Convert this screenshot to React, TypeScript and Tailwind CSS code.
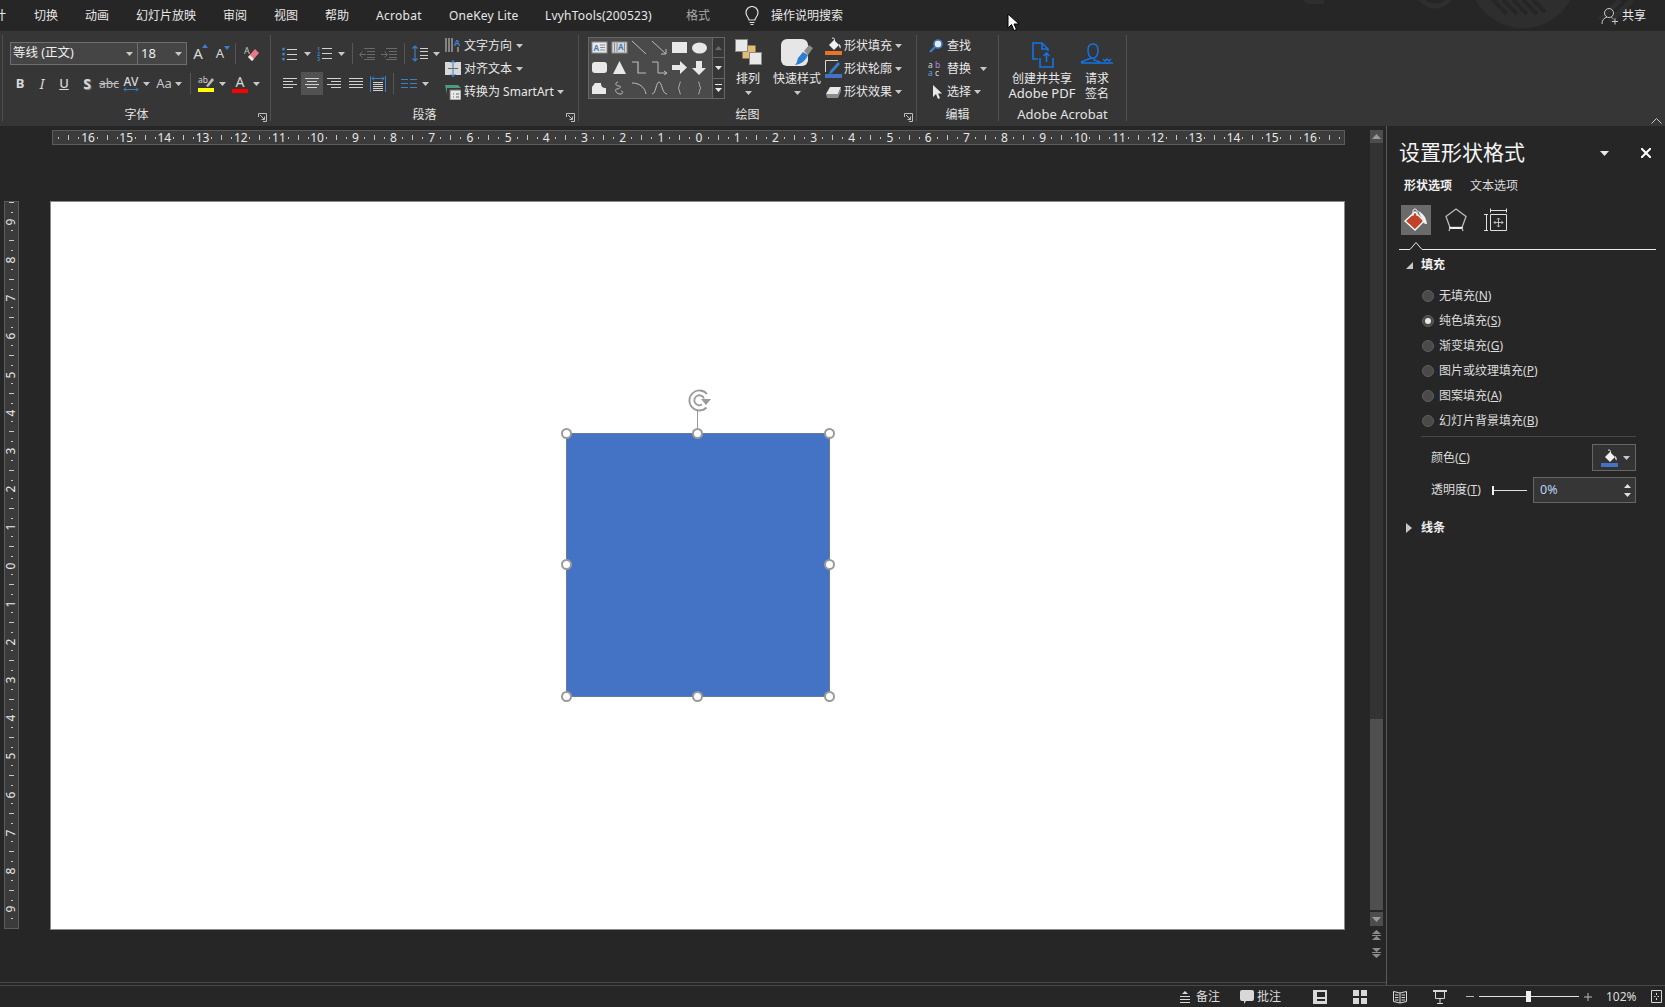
import type { ReactNode } from "react"

const tabs = [
    { label: "切换", w: "w-[24px]" },
    { label: "动画", w: "w-[24px]" },
    { label: "幻灯片放映", w: "w-[60px]" },
    { label: "审阅", w: "w-[24px]" },
    { label: "视图", w: "w-[24px]" },
    { label: "帮助", w: "w-[24px]" },
    { label: "Acrobat", w: "w-[46px] tracking-[0.3px]" },
    { label: "OneKey Lite", w: "w-[69px] tracking-[0.2px]" },
    { label: "LvyhTools(200523)", w: "w-[107px] tracking-[0.2px]" },
]

const fillOptions = [
    { label: "无填充", key: "N" },
    { label: "纯色填充", key: "S", checked: true },
    { label: "渐变填充", key: "G" },
    { label: "图片或纹理填充", key: "P" },
    { label: "图案填充", key: "A" },
    { label: "幻灯片背景填充", key: "B" },
]

const BLUE = "#3b7fc9"

function Caret({ className = "" }: { className?: string }) {
    return (
        <span className={`flex justify-center items-center flex-none ${className}`}>
            <svg width="7" height="4" viewBox="0 0 7 4"><path d="M0 0h7L3.5 4z" fill="#c8c8c8" /></svg>
        </span>
    )
}

function Slot({ w = "w-[22px]", className = "", children }: { w?: string; className?: string; children: ReactNode }) {
    return <span className={`flex items-center justify-center flex-none h-full ${w} ${className}`}>{children}</span>
}

function Sep({ className = "" }: { className?: string }) {
    return <span className={`w-[1px] h-[21px] bg-[#565656] flex-none ${className}`} />
}

function TextLines({ rows }: { rows: [number, number, number][] }) {
    return (
        <svg width="16" height="14" viewBox="0 0 16 14">
            {rows.map(([x1, x2, y], i) => (
                <line key={i} x1={x1} x2={x2} y1={y + 0.5} y2={y + 0.5} stroke="#d2d2d2" />
            ))}
        </svg>
    )
}

function Launcher() {
    return (
        <svg className="absolute right-[3px] -bottom-[1px]" width="9" height="9" viewBox="0 0 9 9" fill="none" stroke="#bdbdbd">
            <path d="M.5 4V.5H8.5V8.5H5" />
            <path d="M2 2l4.5 4.5M6.500 3.500v3h-3" />
        </svg>
    )
}

function Group({ w, label, labelClass = "text-[12px]", launcher, children }: { w: string; label: string; labelClass?: string; launcher?: boolean; children: ReactNode }) {
    return (
        <div className={`relative flex-none flex flex-col h-[86px] border-r border-[#505050] ${w}`}>
            <div className="h-[72px] flex-none">{children}</div>
            <div className={`h-[14px] flex items-center justify-center pt-[2px] text-[#e2e2e2] ${labelClass}`}>{label}</div>
            {launcher && <Launcher />}
        </div>
    )
}

function BucketIcon({ bar }: { bar: string }) {
    return (
        <svg width="18" height="18" viewBox="0 0 18 18">
            <path d="M4 8l5-5 5 5-5 5z" fill="#f0f0f0" />
            <path d="M7 1.500c1-1 2.500-.5 2.500 1V6" fill="none" stroke="#f0f0f0" />
            <path d="M14 7c1.500 1 2 2.500 1.500 4.500-1-.5-1.500-2-1.500-4.500z" fill="#f0f0f0" />
            <rect x="0" y="14" width="17" height="4" fill={bar} />
        </svg>
    )
}

function GalleryShapes() {
    const s = "#bcbcbc"
    const f = "#e8e8e8"
    const shapes: ReactNode[] = [
        <g key="a"><rect x="1" y="1" width="15" height="11" fill={f} stroke="#8c8c8c" /><text x="2.500" y="9.500" fontSize="8" fontWeight="700" fill={BLUE}>A</text><path d="M9 4h5M9 6.500h5M9 9h5" stroke="#8c8c8c" /></g>,
        <g key="b"><rect x="1" y="1" width="15" height="11" fill="#d8d8d8" stroke="#8c8c8c" /><path d="M3.500 2v9M6 2v9M13.500 2v9" stroke="#8c8c8c" /><text x="7" y="9" fontSize="8" fontWeight="700" fill={BLUE}>A</text></g>,
        <path key="c" d="M1 0l14 13" stroke={s} fill="none" />,
        <g key="d" fill="none" stroke={s}><path d="M1 0l14 13" /><path d="M10 13h5V8" /></g>,
        <rect key="e" x="1" y="1" width="15" height="11" fill={f} />,
        <ellipse key="f" cx="8.500" cy="7" rx="7.500" ry="5.500" fill={f} />,
        <rect key="g" x="1" y="1" width="15" height="11" rx="3" fill={f} />,
        <path key="h" d="M8.500 0L15 13H2z" fill={f} />,
        <path key="i" d="M1 1h6v11h8" stroke={s} fill="none" strokeWidth="1.2" />,
        <g key="j" fill="none" stroke={s}><path d="M1 1h6v11h8" /><path d="M13 10l3 2-3 2" /></g>,
        <path key="k" d="M1 4h8V0l7 6.500-7 6.500V9H1z" fill={f} />,
        <path key="l" d="M5 0h6v7h4l-7 7-7-7h4z" fill={f} />,
        <path key="m" d="M1 13V6l3-4h6c0 4 2 5 5 5v6z" fill={f} />,
        <path key="n" d="M7 1C3 2 5 5 8 5S9 8 6 8 5 13 9 13s3-3 1-3" stroke={s} fill="none" />,
        <path key="o" d="M1 2c7 0 13 4 14 11" stroke={s} fill="none" />,
        <path key="p" d="M1 13C5 13 5 1 8 1s3 12 8 12" stroke={s} fill="none" />,
        <path key="q" d="M10 1C8 1 9 6 7 7c2 1 1 6 3 6" stroke={s} fill="none" />,
        <path key="r" d="M7 1c2 0 1 5 3 6-2 1-1 6-3 6" stroke={s} fill="none" />,
    ]
    return (
        <div className="grid grid-cols-6 grid-rows-3 w-[123px] h-full flex-none pr-[3px] bg-[#4a4a4a]">
            {shapes.map((shape, i) => (
                <span key={i} className="flex items-center justify-center">
                    <svg width="17" height="14" viewBox="0 0 17 14">{shape}</svg>
                </span>
            ))}
        </div>
    )
}

function FontGroup() {
    return (
        <Group w="w-[269px] border-l" label="字体" launcher>
            <div className="pl-[7px] pt-[7px] flex flex-col gap-[7px]">
                <div className="flex items-center h-[23px]">
                    <div className="w-[128px] h-[23px] flex-none flex items-center justify-between bg-[#454545] border border-[#6e6e6e] pl-[2px] pr-[4px] text-[12.5px] text-[#f0f0f0]">
                        等线 (正文)
                        <Caret />
                    </div>
                    <div className="w-[50px] h-[23px] flex-none -ml-px flex items-center justify-between bg-[#454545] border border-[#6e6e6e] pl-[3px] pr-[4px] text-[13px] text-[#f0f0f0]">
                        18
                        <Caret />
                    </div>
                    <Slot><span className="relative text-[15px] text-[#d8d8d8]">A<svg className="absolute -right-[5px] top-[2px]" width="6" height="4"><path d="M0 4l3-4 3 4z" fill={BLUE} /></svg></span></Slot>
                    <Slot><span className="relative text-[13px] text-[#d8d8d8]">A<svg className="absolute -right-[6px] top-[2px]" width="6" height="4"><path d="M0 0h6L3 4z" fill={BLUE} /></svg></span></Slot>
                    <Sep className="ml-[4px]" />
                    <Slot w="w-[20px]" className="ml-[6px]">
                        <svg width="16" height="16" viewBox="0 0 16 16">
                            <text x="0" y="8" fontSize="9" fill="#c8c8c8">A</text>
                            <path d="M4 11l7-8 4 4-7 8z" fill="#e4798a" />
                            <path d="M4 11l2-2 4 4-2 2z" fill="#e8e8e8" />
                        </svg>
                    </Slot>
                </div>
                <div className="flex items-center h-[23px] text-[#d8d8d8]">
                    <Slot w="w-[20px]"><b className="text-[13px]">B</b></Slot>
                    <Slot className="ml-[1px]"><i className="text-[14px]">I</i></Slot>
                    <Slot><u className="text-[13px] font-medium">U</u></Slot>
                    <Slot className="ml-[1px]"><b className="text-[14px] [text-shadow:1px_1px_1px_#888]">S</b></Slot>
                    <Slot><s className="text-[12px] text-[#c0c0c0]">abc</s></Slot>
                    <Slot>
                        <span className="flex flex-col items-center leading-[11px] text-[12px] font-medium">
                            AV
                            <svg width="16" height="5" viewBox="0 0 16 5" fill="none" stroke={BLUE}><path d="M1 2.500h14M3 .5l-2 2 2 2M13 .5l2 2-2 2" /></svg>
                        </span>
                    </Slot>
                    <Caret className="w-[8px]" />
                    <Slot w="w-[20px]" className="ml-[4px]"><span className="text-[13px] text-[#c4c4c4]">Aa</span></Slot>
                    <Caret className="w-[8px]" />
                    <Sep className="ml-[8px]" />
                    <Slot w="w-[20px]" className="ml-[5px]">
                        <svg width="16" height="17" viewBox="0 0 16 17">
                            <text x="0" y="8" fontSize="8.500" fill="#d0d0d0">ab</text>
                            <path d="M8 11l6-8 2 2-6 7z" fill="#bdbdbd" />
                            <rect y="13" width="16" height="4" fill="#ffff00" />
                        </svg>
                    </Slot>
                    <Caret className="w-[12px]" />
                    <Slot w="w-[20px]" className="ml-[2px]">
                        <span className="flex flex-col items-center text-[14px] leading-[14px]">
                            A
                            <span className="w-[16px] h-[4px] bg-[#ff0000]" />
                        </span>
                    </Slot>
                    <Caret className="w-[12px]" />
                </div>
            </div>
        </Group>
    )
}

function ParagraphGroup() {
    return (
        <Group w="w-[308px]" label="段落" launcher>
            <div className="flex h-full">
                <div className="w-[174px] flex-none pl-[8px] pt-[7px] flex flex-col gap-[7px]">
                    <div className="flex items-center h-[23px]">
                        <Slot>
                            <svg width="16" height="14" viewBox="0 0 16 14">
                                <circle cx="1.500" cy="2" r="1.500" fill={BLUE} /><circle cx="1.500" cy="7" r="1.500" fill={BLUE} /><circle cx="1.500" cy="12" r="1.500" fill={BLUE} />
                                <path d="M5 2.500h10M5 7.500h10M5 12.500h10" stroke="#d2d2d2" />
                            </svg>
                        </Slot>
                        <Caret className="w-[12px]" />
                        <Slot className="ml-[1px]">
                            <svg width="16" height="16" viewBox="0 0 16 16">
                                <text x="0" y="5" fontSize="5.500" fontWeight="700" fill={BLUE}>1</text>
                                <text x="0" y="10" fontSize="5.500" fontWeight="700" fill={BLUE}>2</text>
                                <text x="0" y="15" fontSize="5.500" fontWeight="700" fill={BLUE}>3</text>
                                <path d="M5 2.500h10M5 7.500h10M5 12.500h10" stroke="#d2d2d2" />
                            </svg>
                        </Slot>
                        <Caret className="w-[10px]" />
                        <Sep className="ml-[6px]" />
                        <Slot className="ml-[3px]">
                            <svg width="16" height="12" viewBox="0 0 16 12" fill="none" stroke="#6a6a6a">
                                <path d="M5 .5h11M8 3.500h8M8 6.500h8M8 9.500h8M5 11.500h11M7 6.500H1M3.500 3.500l-3 3 3 3" />
                            </svg>
                        </Slot>
                        <Slot>
                            <svg width="16" height="12" viewBox="0 0 16 12" fill="none" stroke="#6a6a6a">
                                <path d="M5 .5h11M8 3.500h8M8 6.500h8M8 9.500h8M5 11.500h11M0 6.500h6M3.500 3.500l3 3-3 3" />
                            </svg>
                        </Slot>
                        <Sep className="ml-[4px]" />
                        <Slot className="ml-[4px]">
                            <svg width="16" height="17" viewBox="0 0 16 17" fill="none">
                                <path d="M3 1v15M.5 3.500L3 1l2.500 2.500M.5 13.500L3 16l2.500-2.500" stroke={BLUE} strokeWidth="1.2" />
                                <path d="M8 3.500h8M8 6.500h8M8 10.500h8M8 13.500h8" stroke="#d2d2d2" />
                            </svg>
                        </Slot>
                        <Caret className="w-[10px]" />
                    </div>
                    <div className="flex items-center h-[23px]">
                        <Slot><TextLines rows={[[1, 15, 1], [1, 11, 4], [1, 15, 7], [1, 11, 10]]} /></Slot>
                        <Slot className="bg-[#525252]"><TextLines rows={[[1, 15, 1], [3, 13, 4], [1, 15, 7], [3, 13, 10]]} /></Slot>
                        <Slot><TextLines rows={[[1, 15, 1], [5, 15, 4], [1, 15, 7], [5, 15, 10]]} /></Slot>
                        <Slot><TextLines rows={[[1, 15, 1], [1, 15, 4], [1, 15, 7], [1, 15, 10]]} /></Slot>
                        <Slot>
                            <svg width="16" height="16" viewBox="0 0 16 16" fill="none">
                                <path d="M.5 0v16M15.500 0v16M2 2.500h12M4 .5l-2 2 2 2M12 .5l2 2-2 2" stroke={BLUE} />
                                <path d="M3 6.500h10M3 8.500h10M3 10.500h10M3 12.500h10M3 14.500h10" stroke="#d2d2d2" />
                            </svg>
                        </Slot>
                        <Sep className="ml-[4px]" />
                        <Slot className="ml-[4px]">
                            <svg width="16" height="12" viewBox="0 0 16 12" stroke={BLUE}>
                                <path d="M0 1.500h7M0 5.500h7M0 9.500h7M9 1.500h7M9 5.500h7M9 9.500h7" />
                            </svg>
                        </Slot>
                        <Caret className="w-[10px]" />
                    </div>
                </div>
                <div className="flex flex-col -mt-[1px] text-[12px] text-[#e8e8e8]">
                    <div className="h-[23px] flex items-center">
                        <svg className="mr-[3px]" width="16" height="18" viewBox="0 0 16 18" fill="none">
                            <path d="M1 1v14M4 1v14M7 1v14M13 10v5" stroke="#d0d0d0" />
                            <text x="9" y="9" fontSize="9" fontWeight="700" stroke="none" fill={BLUE}>A</text>
                        </svg>
                        文字方向
                        <Caret className="ml-[4px]" />
                    </div>
                    <div className="h-[23px] flex items-center">
                        <svg className="mr-[3px]" width="16" height="17" viewBox="0 0 16 17">
                            <rect y="2" width="16" height="13" fill="#d8d8d8" />
                            <path d="M8 0v17M5.500 3L8 .5 10.500 3M5.500 14L8 16.500 10.500 14" stroke={BLUE} fill="none" />
                            <path d="M3 8.500h10" stroke="#6a6a6a" />
                        </svg>
                        对齐文本
                        <Caret className="ml-[4px]" />
                    </div>
                    <div className="h-[23px] flex items-center">
                        <svg className="mr-[3px]" width="16" height="16" viewBox="0 0 16 16">
                            <path d="M0 1h13l3 3H2v6z" fill="#4d9a83" />
                            <rect x="5" y="6" width="11" height="10" fill="#e8e8e8" stroke="#777" />
                            <path d="M8 10h1M11 10h3M8 13h1M11 13h3" stroke="#666" />
                        </svg>
                        转换为 SmartArt
                        <Caret className="ml-[3px]" />
                    </div>
                </div>
            </div>
        </Group>
    )
}

function DrawingGroup() {
    return (
        <Group w="w-[338px]" label="绘图" launcher>
            <div className="flex pl-[9px]">
                <div className="w-[137px] h-[62px] mt-[2px] flex-none flex border border-[#666666]">
                    <GalleryShapes />
                    <div className="flex-1 flex flex-col border-l border-[#666666]">
                        <span className="flex-1 flex items-center justify-center"><svg width="7" height="4"><path d="M0 4l3.500-4L7 4z" fill="#6a6a6a" /></svg></span>
                        <span className="flex-1 flex items-center justify-center border-y border-[#666666]"><svg width="7" height="4"><path d="M0 0h7L3.500 4z" fill="#e8e8e8" /></svg></span>
                        <span className="flex-1 flex items-center justify-center"><svg width="7" height="8"><path d="M0 0h7v1H0zM0 4h7L3.500 8z" fill="#e8e8e8" /></svg></span>
                    </div>
                </div>
                <div className="w-[44px] flex-none flex flex-col items-center pl-[2px] text-[12px] text-[#e8e8e8]">
                    <svg className="mt-[4px]" width="27" height="26" viewBox="0 0 27 26">
                        <rect x="7.500" y="6.500" width="13" height="13" fill="#e3bd76" />
                        <rect x="0.5" y="0.5" width="12" height="12" fill="#e8e8e8" stroke="#8a8a8a" />
                        <rect x="14.500" y="13.500" width="12" height="12" fill="#e8e8e8" stroke="#8a8a8a" />
                    </svg>
                    <span className="mt-[6px] h-[16px] leading-[16px]">排列</span>
                    <Caret className="mt-[4px]" />
                </div>
                <div className="w-[54px] flex-none flex flex-col items-center pl-[2px] text-[12px] text-[#e8e8e8]">
                    <svg className="mt-[3px]" width="32" height="30" viewBox="0 0 32 30">
                        <rect x="0" y="1" width="27" height="27" rx="6" fill="#e6e6e6" />
                        <path d="M23 13l5-6 4 3-5 7z" fill="#8c8c8c" />
                        <path d="M22 14l5 3c-2 5-6 9-13 10 2-2 2-4 3-7z" fill="#2f7fd0" />
                    </svg>
                    <span className="mt-[3px] h-[16px] leading-[16px] whitespace-nowrap">快速样式</span>
                    <Caret className="mt-[4px]" />
                </div>
                <div className="flex flex-col -mt-[1px] text-[12px] text-[#e8e8e8] ml-[2px]">
                    <div className="h-[23px] flex items-center">
                        <span className="w-[17px] mr-[2px]"><BucketIcon bar="#e8742a" /></span>
                        形状填充
                        <Caret className="ml-[3px]" />
                    </div>
                    <div className="h-[23px] flex items-center">
                        <svg className="mr-[2px]" width="17" height="18" viewBox="0 0 17 18" fill="none">
                            <path d="M.5 12V.5H13" stroke="#d8d8d8" />
                            <path d="M5 11l8-9 2 2-8 9-3 1z" fill="#3b7fc9" />
                            <rect y="14" width="17" height="4" fill="#4472c4" />
                        </svg>
                        形状轮廓
                        <Caret className="ml-[3px]" />
                    </div>
                    <div className="h-[23px] flex items-center">
                        <svg className="mr-[2px]" width="17" height="14" viewBox="0 0 17 14">
                            <path d="M1 9l4-7h11l-3 7z" fill="#e8e8e8" />
                            <path d="M1 9h12l3-7v4l-3 7H2z" fill="#8c8c8c" />
                        </svg>
                        形状效果
                        <Caret className="ml-[3px]" />
                    </div>
                </div>
            </div>
        </Group>
    )
}

function EditGroup() {
    return (
        <Group w="w-[82px]" label="编辑">
            <div className="pl-[11px] -mt-[1px] flex flex-col text-[12px] text-[#e8e8e8]">
                <div className="h-[23px] flex items-center">
                    <svg className="mr-[3px]" width="16" height="16" viewBox="0 0 16 16" fill="none">
                        <circle cx="10" cy="6" r="4" fill="#e8e8e8" stroke={BLUE} strokeWidth="1.600" />
                        <path d="M7 9l-5 5" stroke={BLUE} strokeWidth="2.400" />
                    </svg>
                    查找
                </div>
                <div className="h-[23px] flex items-center">
                    <svg className="mr-[3px]" width="16" height="17" viewBox="0 0 16 17">
                        <text x="0" y="7.500" fontSize="8.500" fill="#d8d8d8">a</text>
                        <text x="7" y="7.500" fontSize="8.500" fill="#b48ae0">b</text>
                        <text x="0" y="16" fontSize="8.500" fill="#5fa0e0">a</text>
                        <text x="7" y="16" fontSize="8.500" fill="#d8d8d8">c</text>
                    </svg>
                    替换
                    <Caret className="ml-[9px]" />
                </div>
                <div className="h-[23px] flex items-center">
                    <svg className="mr-[3px]" width="16" height="16" viewBox="0 0 16 16">
                        <path d="M5 1v12l3-3 2 5 2-1-2-4.500h4z" fill="#e8e8e8" />
                    </svg>
                    选择
                    <Caret className="ml-[3px]" />
                </div>
            </div>
        </Group>
    )
}

function AcrobatGroup() {
    return (
        <Group w="w-[128px]" label="Adobe Acrobat" labelClass="text-[13px]">
            <div className="flex pl-[3px] text-[12px] leading-[15px] text-[#e8e8e8] text-center">
                <div className="w-[80px] flex-none flex flex-col items-center">
                    <svg className="mt-[7px]" width="24" height="26" viewBox="0 0 24 26" fill="none" stroke="#1473e6" strokeWidth="1.600">
                        <path d="M8 17H3V1h9l6 6v2" />
                        <path d="M12 1v6h6" />
                        <path d="M10 16v9h13v-9M16.500 20V11M13.500 14l3-3 3 3" />
                    </svg>
                    <span className="mt-[3px] whitespace-nowrap">创建并共享<br /><span className="text-[13px]">Adobe PDF</span></span>
                </div>
                <div className="w-[30px] flex-none flex flex-col items-center">
                    <svg className="mt-[7px]" width="32" height="26" viewBox="0 0 32 26" fill="none" stroke="#1473e6" strokeWidth="1.500">
                        <path d="M13 15c-3-1-4-4-4-8 0-4 2-6 5-6s5 2 5 6c0 4-1 7-4 8v2c3 1 5 1 7 3H1c2-2 5-2 6-3z" transform="translate(-2 1)" />
                        <path d="M21 21h11M22 17l2 2 2-2 2 2 2-2" />
                    </svg>
                    <span className="mt-[3px] whitespace-nowrap">请求<br />签名</span>
                </div>
            </div>
        </Group>
    )
}

function HorizontalRuler() {
    const marks: number[] = []
    for (let n = 17; n >= -17; n--) marks.push(Math.abs(n))
    return (
        <div className="ml-[52px] mt-[4px] w-[1293px] h-[15px] flex-none flex items-center justify-center overflow-hidden bg-[#3b3b3b] border border-[#5c5c5c]">
            {marks.map((n, i) => (
                <div key={i} className="flex-none flex items-center">
                    <span className="w-[1px] h-[5px] bg-[#c8c8c8] flex-none" />
                    <span className="w-[37.2px] flex items-center justify-between px-[9px] text-[12px] leading-none text-[#e8e8e8]">
                        <span className="w-[1px] h-[2px] bg-[#c8c8c8]" />
                        {n < 17 ? n : ""}
                        <span className="w-[1px] h-[2px] bg-[#c8c8c8]" />
                    </span>
                </div>
            ))}
        </div>
    )
}

function VerticalRuler() {
    const marks: number[] = []
    for (let n = 10; n >= -10; n--) marks.push(Math.abs(n))
    return (
        <div className="ml-[4px] w-[15px] h-[728px] flex-none flex flex-col items-center justify-center overflow-hidden bg-[#3b3b3b] border border-[#5c5c5c]">
            {marks.map((n, i) => (
                <div key={i} className="flex-none flex flex-col items-center">
                    <span className="h-[1px] w-[5px] bg-[#c8c8c8] flex-none" />
                    <span className="h-[37.2px] flex flex-col items-center justify-between py-[9px] text-[12px] leading-none text-[#e8e8e8]">
                        <span className="h-[1px] w-[2px] bg-[#c8c8c8]" />
                        <span className="-rotate-90">{n < 10 ? n : ""}</span>
                        <span className="h-[1px] w-[2px] bg-[#c8c8c8]" />
                    </span>
                </div>
            ))}
        </div>
    )
}

function Handle({ className }: { className: string }) {
    return <span className={`absolute w-[11px] h-[11px] rounded-full bg-white border-2 border-[#9a9a9a] ${className}`} />
}

function Slide() {
    return (
        <div className="ml-[31px] w-[1295px] h-[729px] flex-none flex items-center justify-center pb-[2px] pl-[1px] bg-white border border-[#8a8a8a]">
            <div className="relative w-[264px] h-[264px] bg-[#4472c4] border border-[#6b7a94]">
                <Handle className="-left-[6px] -top-[6px]" />
                <Handle className="left-[125px] -top-[6px]" />
                <Handle className="-right-[6px] -top-[6px]" />
                <Handle className="-left-[6px] top-[125px]" />
                <Handle className="-right-[6px] top-[125px]" />
                <Handle className="-left-[6px] -bottom-[6px]" />
                <Handle className="left-[125px] -bottom-[6px]" />
                <Handle className="-right-[6px] -bottom-[6px]" />
                <span className="absolute left-[130px] -top-[24px] w-[1px] h-[18px] bg-[#9a9a9a]" />
                <svg className="absolute left-[120px] -top-[45px]" width="28" height="24" viewBox="0 0 28 24" fill="none" stroke="#9a9a9a" strokeWidth="1.800">
                    <path d="M19.500 18.500A10 10 0 1 1 20 5" />
                    <path d="M15 15.500a5 5 0 1 1 2-6" />
                    <path d="M14 10h10l-5 6z" fill="#9a9a9a" stroke="none" />
                </svg>
            </div>
        </div>
    )
}

function Scrollbar() {
    return (
        <div className="w-[13px] flex-none flex flex-col items-center mt-[4px]">
            <span className="w-full h-[13px] flex-none flex items-center justify-center bg-[#4d4d4d]"><svg width="9" height="5"><path d="M0 5l4.500-5L9 5z" fill="#9a9a9a" /></svg></span>
            <span className="w-full h-[576px] flex-none bg-[#333333]" />
            <span className="w-full h-[191px] flex-none bg-[#4f4f4f]" />
            <span className="w-full h-[2px] flex-none" />
            <span className="w-full h-[14px] flex-none flex items-center justify-center bg-[#4d4d4d]"><svg width="9" height="5"><path d="M0 0h9L4.500 5z" fill="#9a9a9a" /></svg></span>
            <svg className="mt-[4px]" width="9" height="10" viewBox="0 0 9 10"><path d="M0 4l4.500-4L9 4zM0 5h9v1H0zM0 10l4.500-4L9 10z" fill="#8c8c8c" /></svg>
            <svg className="mt-[8px]" width="9" height="10" viewBox="0 0 9 10"><path d="M0 0h9L4.500 4zM0 4h9v1H0zM0 6h9l-4.500 4z" fill="#8c8c8c" /></svg>
        </div>
    )
}

function FormatPanel() {
    return (
        <aside className="flex-1 border-l border-[#5a5a5a] pl-[12px] pt-[12px] text-[12px] text-[#dcdcdc]">
            <div className="flex items-center h-[30px] pr-[14px]">
                <span className="text-[21px] text-[#f4f4f4]">设置形状格式</span>
                <svg className="ml-auto" width="9" height="5"><path d="M0 0h9L4.500 5z" fill="#e8e8e8" /></svg>
                <svg className="ml-[32px]" width="10" height="10" viewBox="0 0 10 10" stroke="#fff" strokeWidth="2"><path d="M0 0l10 10M10 0L0 10" /></svg>
            </div>
            <div className="flex h-[16px] mt-[10px] ml-[5px] gap-[18px] items-center">
                <b className="text-[#f0f0f0]">形状选项</b>
                <span>文本选项</span>
            </div>
            <div className="flex items-center mt-[11px] ml-[2px] h-[30px]">
                <span className="w-[30px] h-[30px] flex items-center justify-center bg-[#6a6a6a]">
                    <svg width="26" height="24" viewBox="0 0 26 24">
                        <path d="M2 13L12 4l9 9-9 9z" fill="#c0432a" stroke="#fff" strokeWidth="1.400" />
                        <path d="M10 8V3c0-2.500 4-2.500 4 0v5" fill="none" stroke="#fff" />
                        <path d="M15 3c5 2 8 6 9 13-3 0-4-1-5-5z" fill="#f0f0f0" />
                    </svg>
                </span>
                <svg className="ml-[13px]" width="24" height="26" viewBox="0 0 24 26" fill="none" stroke="#b8b8b8" strokeWidth="1.300">
                    <path d="M12 2l10 7.500-4 11H6l-4-11z" />
                    <path d="M5 21h14" stroke="#f0f0f0" strokeWidth="2" />
                    <path d="M6 21l-1 3M18 21l1 3" />
                </svg>
                <svg className="ml-[16px]" width="24" height="24" viewBox="0 0 24 24" fill="none" stroke="#e0e0e0">
                    <path d="M6.500 6.500h16v16h-16z" />
                    <path d="M6.500 .5v4M22.500 .5v4M6.500 2.500h16M0 6.500h4M0 22.500h4M2.500 6.500v16" />
                    <path d="M14.500 10v9M10 14.500h9M13 11.500l1.500-1.500 1.500 1.500M13 17.500l1.500 1.500 1.500-1.500M11.500 13L10 14.500l1.500 1.500M17.500 13l1.500 1.500-1.500 1.500" strokeWidth=".8" />
                </svg>
            </div>
            <svg className="block mt-[6px]" width="257" height="9" viewBox="0 0 257 9" fill="none" stroke="#e8e8e8">
                <path d="M0 8.500h11L17 1.500l6 7h234" />
            </svg>
            <div className="flex items-center h-[14px] mt-[8px] ml-[7px]">
                <svg width="7" height="7"><path d="M7 0v7H0z" fill="#c8c8c8" /></svg>
                <b className="ml-[8px] text-[#f0f0f0]">填充</b>
            </div>
            <div className="mt-[11px] ml-[23px] flex flex-col">
                {fillOptions.map(opt => (
                    <label key={opt.key} className="h-[25px] flex items-center">
                        <span className="w-[12px] h-[12px] rounded-full bg-[#4a4a4a] border border-[#5e5e5e] flex items-center justify-center flex-none">
                            {opt.checked && <span className="w-[6px] h-[6px] rounded-full bg-[#e8e8e8]" />}
                        </span>
                        <span className="ml-[5px]">{opt.label}(<u>{opt.key}</u>)</span>
                    </label>
                ))}
            </div>
            <div className="mt-[3px] ml-[22px] w-[215px] h-[1px] bg-[#484848]" />
            <div className="flex items-center w-[237px] h-[27px] mt-[7px] pl-[32px]">
                <span>颜色(<u>C</u>)</span>
                <span className="ml-auto w-[44px] h-[27px] flex items-center justify-between bg-[#333333] border border-[#666666] pl-[8px] pr-[5px]">
                    <BucketIcon bar="#4472c4" />
                    <Caret />
                </span>
            </div>
            <div className="flex items-center w-[237px] h-[26px] mt-[6px] pl-[32px]">
                <span>透明度(<u>T</u>)</span>
                <span className="ml-auto flex items-center w-[35px]">
                    <span className="w-[2px] h-[9px] bg-[#f0f0f0]" />
                    <span className="flex-1 h-[1px] bg-[#e0e0e0]" />
                </span>
                <span className="ml-[6px] w-[103px] h-[26px] flex items-center justify-between bg-[#363636] border border-[#666666] pl-[6px] pr-[4px] text-[#b8d4f0] text-[12.5px]">
                    0%
                    <span className="flex flex-col gap-[5px]">
                        <svg width="7" height="4"><path d="M0 4l3.500-4L7 4z" fill="#e0e0e0" /></svg>
                        <svg width="7" height="4"><path d="M0 0h7L3.500 4z" fill="#e0e0e0" /></svg>
                    </span>
                </span>
            </div>
            <div className="flex items-center h-[14px] mt-[18px] ml-[7px]">
                <svg width="6" height="10"><path d="M0 0l6 5-6 5z" fill="#c8c8c8" /></svg>
                <b className="ml-[9px] text-[#f0f0f0]">线条</b>
            </div>
        </aside>
    )
}

function StatusBar() {
    return (
        <footer className="h-[22px] flex-none flex items-center border-t border-[#484848] pr-[3px] text-[12px] text-[#dcdcdc]">
            <svg className="ml-auto" width="12" height="12" viewBox="0 0 12 12" stroke="#d8d8d8"><path d="M3 3l3-3 3 3z" fill="#d8d8d8" stroke="none" /><path d="M1 5.500h10M1 8.500h10M1 11.500h10" /></svg>
            <span className="ml-[5px]">备注</span>
            <svg className="ml-[20px]" width="14" height="14" viewBox="0 0 14 14"><path d="M2 0h10a2 2 0 0 1 2 2v7a2 2 0 0 1-2 2H6l-2 3v-3H2a2 2 0 0 1-2-2V2a2 2 0 0 1 2-2z" fill="#d8d8d8" /></svg>
            <span className="ml-[3px]">批注</span>
            <svg className="ml-[32px]" width="14" height="14" viewBox="0 0 14 14"><path d="M0 0h14v14H0z" fill="#d8d8d8" /><path d="M4 2h8v5H4zM4 9h8v2H4z" fill="#262626" /></svg>
            <svg className="ml-[26px]" width="14" height="14" viewBox="0 0 14 14" fill="#d8d8d8"><path d="M0 0h6v6H0zM8 0h6v6H8zM0 8h6v6H0zM8 8h6v6H8z" /></svg>
            <svg className="ml-[26px]" width="14" height="14" viewBox="0 0 14 14" fill="none" stroke="#d8d8d8"><path d="M.5 1.500L7 3l6.500-1.500v10L7 13 .5 11.500zM7 3v10M2 5h3.500M2 7.500h3.500M2 10h3.500M8.500 5H12M8.500 7.500H12M8.500 10H12" /></svg>
            <svg className="ml-[26px]" width="14" height="14" viewBox="0 0 14 14" fill="none" stroke="#d8d8d8"><path d="M0 1h14" strokeWidth="2" /><path d="M2.500 2v6.500h9V2M7 8.500V13M4 13.500h6" /></svg>
            <span className="ml-[19px] w-[8px] h-[1px] bg-[#b8b8b8]" />
            <span className="ml-[5px] w-[100px] h-[1px] bg-[#e0e0e0] relative">
                <span className="absolute left-[47px] -top-[5px] w-[5px] h-[11px] bg-[#f0f0f0]" />
            </span>
            <svg className="ml-[5px]" width="8" height="8" viewBox="0 0 8 8" stroke="#b8b8b8"><path d="M0 4h8M4 0v8" /></svg>
            <span className="ml-[14px] w-[31px] whitespace-nowrap">102%</span>
            <svg className="ml-[14px]" width="11" height="13" viewBox="0 0 11 13" fill="none" stroke="#d8d8d8"><path d="M.5.5h10v12H.5z" /><path d="M5.500 3v2M5.500 8v2M3 6.500h1.500M6.500 6.500H8" /></svg>
        </footer>
    )
}

export default function App() {
    return (
        <div className="relative w-[1665px] h-[1007px] flex flex-col overflow-hidden bg-[#262626] text-[#e8e8e8] [font-family:'Noto_Sans','Noto_Sans_CJK_SC',sans-serif]">
            <header className="relative h-[31px] flex-none flex items-center gap-[27px] bg-[#262626] text-[12px] overflow-hidden">
                <svg className="absolute right-0 top-0" width="365" height="31" viewBox="1300 0 365 31" fill="none">
                    <path d="M1303 0h22l-2 4h-16z" fill="#2e2e2e" />
                    <circle cx="1435" cy="-12" r="18" stroke="#2e2e2e" strokeWidth="5" />
                    <circle cx="1523" cy="-26" r="54" fill="#2e2e2e" />
                    <path d="M1493 0l14 14M1503 0l14 14M1513 0l14 14M1523 0l14 14M1533 0l12 12" stroke="#262626" strokeWidth="4" />
                    <path d="M1620 0l-20 20M1632 0l-22 22" stroke="#2e2e2e" strokeWidth="5" />
                </svg>
                <span className="-ml-[6px] w-[12px] flex-none mr-[1px]">计</span>
                {tabs.map(tab => (
                    <span key={tab.label} className={`flex-none whitespace-nowrap ${tab.w}`}>{tab.label}</span>
                ))}
                <span className="flex-none ml-[7px] text-[#a8a8a8]">格式</span>
                <svg className="flex-none ml-[7px]" width="16" height="20" viewBox="0 0 16 20" fill="none" stroke="#e0e0e0" strokeWidth="1.200">
                    <path d="M5 14c0-2-3-4-3-7.500a6 6 0 0 1 12 0C14 10 11 12 11 14z" />
                    <path d="M5.500 16.500h5M6.500 18.500h3" />
                </svg>
                <span className="flex-none -ml-[16px]">操作说明搜索</span>
                <span className="absolute left-[1601px] flex items-center gap-[3px]">
                    <svg width="18" height="18" viewBox="0 0 18 18" fill="none" stroke="#c8c8c8">
                        <circle cx="8" cy="6" r="4.500" />
                        <path d="M1 17c0-4 2-6 5-7M10.500 10.500c1 .5 1.500 1 2 1.500M11 14.500h6M14 11.500v6" />
                    </svg>
                    <span>共享</span>
                </span>
            </header>

            <div className="relative h-[95px] flex-none flex items-start pl-[2px] pt-[4px] bg-[#363636]">
                <FontGroup />
                <ParagraphGroup />
                <DrawingGroup />
                <EditGroup />
                <AcrobatGroup />
                <svg className="absolute left-[1651px] bottom-[2px]" width="11" height="6" viewBox="0 0 11 6" fill="none" stroke="#c8c8c8"><path d="M.5 5.500l5-5 5 5" /></svg>
            </div>

            <div className="flex-1 flex min-h-0">
                <main className="w-[1386px] flex-none flex border-b border-[#484848] h-[857px]">
                    <div className="w-[1370px] flex-none flex flex-col">
                        <HorizontalRuler />
                        <div className="flex mt-[56px]">
                            <VerticalRuler />
                            <Slide />
                        </div>
                    </div>
                    <Scrollbar />
                </main>
                <FormatPanel />
            </div>

            <StatusBar />

            <svg className="absolute left-[1007px] top-[13px]" width="13" height="19" viewBox="0 0 13 19">
                <path d="M1 1v14l3.500-3.500 2.500 6 2.500-1-2.500-5.500h5z" fill="#fff" stroke="#000" />
            </svg>
        </div>
    )
}
